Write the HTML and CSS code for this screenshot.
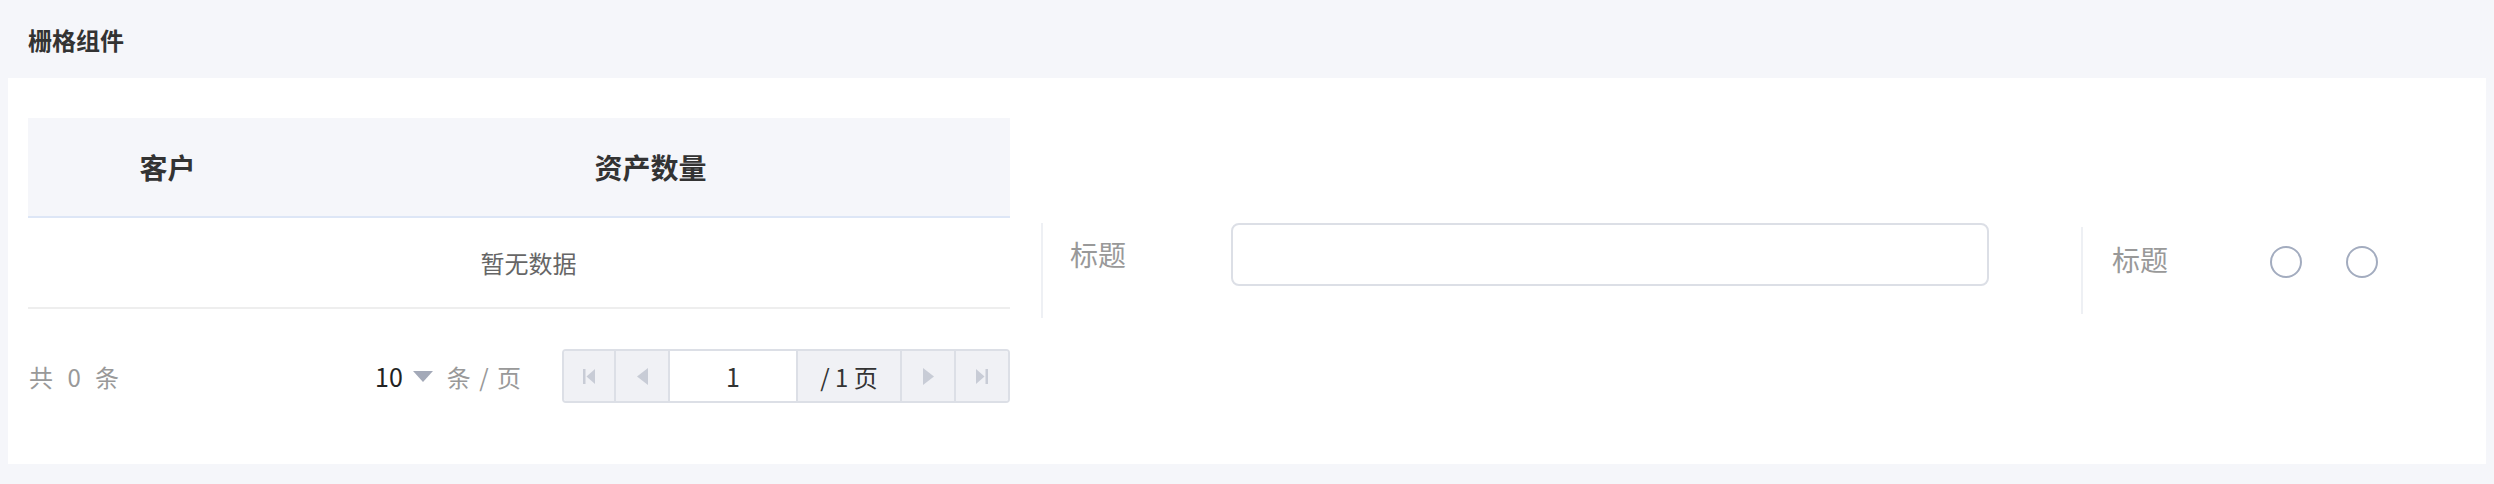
FILE: index.html
```html
<!DOCTYPE html>
<html lang="zh-CN">
<head>
  <meta charset="utf-8">
  <title>栅格组件</title>
  <link rel="stylesheet" href="styles.css">
</head>
<body>
  <!-- Page title bar -->
  <div class="page-header">栅格组件</div>

  <!-- White content panel -->
  <div class="panel">
    <div class="grid-row">

      <!-- Column 1: table with pager -->
      <div class="col col-table">
        <table class="data-table">
          <thead>
            <tr>
              <th class="th-customer">客户</th>
              <th class="th-amount">资产数量</th>
            </tr>
          </thead>
          <tbody>
            <tr>
              <td colspan="2" class="empty">暂无数据</td>
            </tr>
          </tbody>
        </table>

        <div class="table-footer">
          <span class="total">共 0 条</span>
          <div class="pager-right">
            <div class="page-size">
              <span class="size-value">10</span>
              <span class="caret"></span>
              <span class="size-unit">条 / 页</span>
            </div>
            <div class="pager">
              <button class="pager-btn btn-first" aria-label="首页">
                <svg width="12" height="15" viewBox="0 0 12 15"><rect x="0" y="0" width="2.5" height="15"/><polygon points="12,0 3.5,7.5 12,15"/></svg>
              </button>
              <button class="pager-btn btn-prev" aria-label="上一页">
                <svg width="11" height="17" viewBox="0 0 11 17"><polygon points="11,0 0,8.5 11,17"/></svg>
              </button>
              <input class="pager-input" type="text" value="1" aria-label="页码">
              <span class="pager-total">/ 1 页</span>
              <button class="pager-btn btn-next" aria-label="下一页">
                <svg width="11" height="17" viewBox="0 0 11 17"><polygon points="0,0 11,8.5 0,17"/></svg>
              </button>
              <button class="pager-btn btn-last" aria-label="末页">
                <svg width="12" height="15" viewBox="0 0 12 15"><polygon points="0,0 8.5,7.5 0,15"/><rect x="9.5" y="0" width="2.5" height="15"/></svg>
              </button>
            </div>
          </div>
        </div>
      </div>

      <!-- Column 2: text field -->
      <div class="col col-input">
        <div class="form-item">
          <label class="form-label" for="title">标题</label>
          <input class="text-input" id="title" type="text">
        </div>
      </div>

      <!-- Column 3: radios -->
      <div class="col col-radio">
        <div class="form-item">
          <span class="form-label radio-label">标题</span>
          <div class="radio-group">
            <span class="radio"></span>
            <span class="radio"></span>
          </div>
        </div>
      </div>

    </div>
  </div>
</body>
</html>
```

FILE: styles.css
```css
/* Page base */
html, body {
  height: 484px;
  overflow: hidden;
}

body {
  margin: 0;
  background: #f5f6fa;
  font-family: "Noto Sans CJK SC", "Noto Sans", sans-serif;
  color: #333;
}

/* Title bar */
.page-header {
  height: 78px;
  display: flex;
  align-items: center;
  padding-left: 28px;
  font-size: 24px;
  font-weight: 700;
  color: #333;
}

/* White panel */
.panel {
  margin: 0 8px;
  background: #fff;
  padding: 40px 20px 41px;
}

.grid-row {
  display: flex;
  align-items: center;
}

/* Column 1 - table */
.col-table {
  width: 982px;
  margin-bottom: 20px;
}

.data-table {
  width: 100%;
  border-collapse: collapse;
  table-layout: fixed;
}

.data-table th {
  height: 98px;
  padding: 0;
  background: #f5f6fa;
  border-bottom: 2px solid #dde6f6;
  font-size: 28px;
  font-weight: 700;
  color: #333;
  text-align: center;
}

.th-customer {
  width: 279px;
}

.th-amount {
  padding-right: 16px !important;
}

.data-table td.empty {
  height: 89px;
  padding: 0 0 0 19px;
  border-bottom: 2px solid #eeeeee;
  font-size: 24px;
  color: #666;
  text-align: center;
}

/* Footer with total + pager */
.table-footer {
  display: flex;
  justify-content: space-between;
  align-items: center;
  margin-top: 40px;
  height: 54px;
}

.total {
  padding-left: 1px;
  font-size: 24px;
  color: #999;
  word-spacing: 9px;
}

.pager-right {
  display: flex;
  align-items: center;
  gap: 41px;
}

.page-size {
  display: flex;
  align-items: center;
  font-size: 24px;
}

.size-value {
  font-size: 25px;
  color: #222;
}

.caret {
  width: 0;
  height: 0;
  border-left: 10.5px solid transparent;
  border-right: 10.5px solid transparent;
  border-top: 11px solid #a3a9b8;
  margin: 0 14px 0 10px;
}

.size-unit {
  color: #999;
  word-spacing: 3px;
}

/* Pager box */
.pager {
  display: flex;
  height: 54px;
  box-sizing: border-box;
  border: 2px solid #dcdfe6;
  border-radius: 4px;
  overflow: hidden;
}

.pager-btn {
  width: 54px;
  box-sizing: border-box;
  border: none;
  border-right: 2px solid #dcdfe6;
  background: #f0f1f5;
  padding: 0;
  display: flex;
  align-items: center;
  justify-content: center;
  cursor: pointer;
}

.pager-btn svg {
  fill: #c8ccd6;
}

.btn-first {
  width: 52px;
}

.btn-last {
  width: 52px;
  border-right: none;
}

.pager-input {
  width: 128px;
  box-sizing: border-box;
  border: none;
  border-right: 2px solid #dcdfe6;
  padding: 0;
  font-family: inherit;
  font-size: 25px;
  color: #333;
  text-align: center;
  outline: none;
}

.pager-total {
  width: 104px;
  box-sizing: border-box;
  border-right: 2px solid #dcdfe6;
  background: #f0f1f5;
  display: flex;
  align-items: center;
  justify-content: center;
  font-size: 24px;
  color: #333;
}

/* Form columns */
.col-input,
.col-radio {
  box-sizing: border-box;
  border-left: 2px solid #eef0f4;
}

.col-input {
  width: 1040px;
  margin-left: 31px;
  padding: 0 0 32px 27px;
}

.col-radio {
  flex: 1;
  padding: 0 0 17px 29px;
}

.form-item {
  display: flex;
  align-items: center;
}

.col-input .form-label {
  margin-bottom: 2px;
}

.col-radio .form-item {
  height: 70px;
}

.form-label {
  width: 161px;
  flex-shrink: 0;
  font-size: 28px;
  color: #999;
}

.radio-label {
  width: 158px;
  margin-bottom: 6px;
}

.text-input {
  width: 758px;
  height: 63px;
  box-sizing: border-box;
  border: 2px solid #dcdfe6;
  border-radius: 8px;
  padding: 0 16px;
  font-family: inherit;
  font-size: 24px;
  outline: none;
}

.radio-group {
  display: flex;
  gap: 44px;
}

.radio {
  width: 32px;
  height: 32px;
  box-sizing: border-box;
  border: 2px solid #a3acbf;
  border-radius: 50%;
}
```
